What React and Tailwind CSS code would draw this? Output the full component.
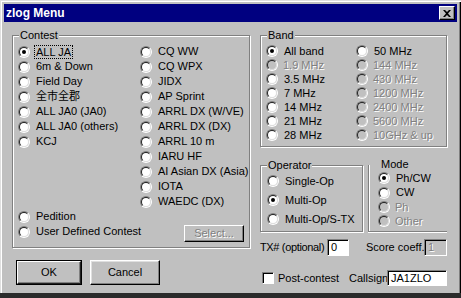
import React from "react";

const Radio = ({ checked, disabled }) => (
  <span className="relative block w-[12px] h-[12px] shrink-0 rounded-full border border-t-[#808080] border-l-[#808080] border-b-white border-r-white">
    {disabled ? (
      <span className="absolute inset-0 rounded-full border border-t-[#202020] border-l-[#202020] border-b-[#dfdfdf] border-r-[#dfdfdf] bg-[#c0c0c0]" />
    ) : (
      <span className="absolute inset-0 rounded-full border border-t-[#202020] border-l-[#202020] border-b-[#dfdfdf] border-r-[#dfdfdf] bg-white" />
    )}
    {checked && <span className="absolute left-[3px] top-[3px] w-[4px] h-[4px] rounded-full bg-black" />}
  </span>
);

const Dis = ({ children }) => (
  <span className="text-[#808080] [text-shadow:1px_1px_0_#ffffff]">{children}</span>
);

const Item = ({ label, checked, disabled, focus, h = "h-[15px]" }) => (
  <div className={`flex items-center gap-[5px] whitespace-nowrap ${h}`}>
    <Radio checked={checked} disabled={disabled} />
    {disabled ? (
      <Dis>{label}</Dis>
    ) : focus ? (
      <span className="pl-[1px] pr-[1px] outline outline-1 outline-dotted outline-black leading-[12px]">{label}</span>
    ) : (
      <span className="pl-[1px]">{label}</span>
    )}
  </div>
);

const Group = ({ label, className, children }) => (
  <div className={`relative border border-[#808080] shadow-[inset_1px_1px_0_#ffffff,1px_1px_0_#ffffff] ${className}`}>
    <span className="absolute left-[6px] top-[-8px] bg-[#c0c0c0] px-[1px] leading-[14px]">{label}</span>
    {children}
  </div>
);

const Input = ({ className, children, disabled }) =>
  disabled ? (
    <div className={`flex items-center pl-[3px] border border-t-[#808080] border-l-[#808080] border-b-white border-r-white shadow-[inset_1px_1px_0_#000000] bg-[#c0c0c0] ${className}`}>
      <Dis>{children}</Dis>
    </div>
  ) : (
    <div className={`flex items-center pl-[3px] border border-t-[#808080] border-l-[#808080] border-b-white border-r-white shadow-[inset_1px_1px_0_#000000] bg-white ${className}`}>
      {children}
    </div>
  );

export default function App() {
  const contest1 = ["ALL JA", "6m & Down", "Field Day", "全市全郡", "ALL JA0 (JA0)", "ALL JA0 (others)", "KCJ"];
  const contest2 = [
    "CQ WW",
    "CQ WPX",
    "JIDX",
    "AP Sprint",
    "ARRL DX (W/VE)",
    "ARRL DX (DX)",
    "ARRL 10 m",
    "IARU HF",
    "AI Asian DX (Asia)",
    "IOTA",
    "WAEDC (DX)",
  ];
  const band1 = [
    ["All band", false, true],
    ["1.9 MHz", true],
    ["3.5 MHz"],
    ["7 MHz"],
    ["14 MHz"],
    ["21 MHz"],
    ["28 MHz"],
  ];
  const band2 = [["50 MHz"], ["144 MHz", true], ["430 MHz", true], ["1200 MHz", true], ["2400 MHz", true], ["5600 MHz", true], ["10GHz & up", true]];

  return (
    <div className="w-[461px] h-[298px] overflow-hidden bg-[#c0c0c0] flex flex-col pt-[4px] px-[4px] text-[11px] text-black font-['Liberation_Sans','Noto_Sans_CJK_JP',Arial,sans-serif] shadow-[inset_1px_1px_0_#dfdfdf,inset_2px_2px_0_#ffffff,inset_-1px_0_0_#000000,inset_-2px_0_0_#808080] border-b-[5px] border-b-[#2b2b2b]">
      {/* Title bar */}
      <div className="h-[18px] shrink-0 bg-[#000080] flex items-center justify-between pl-[2px] pr-[2px]">
        <span className="text-white font-bold text-[12px] leading-none">zlog Menu</span>
        <div className="w-[16px] h-[14px] bg-[#c0c0c0] border border-t-white border-l-white border-b-black border-r-black shadow-[inset_-1px_-1px_0_#808080] flex items-center justify-center">
          <svg width="8" height="7" viewBox="0 0 8 7">
            <path d="M0 0 L2 0 L4 2 L6 0 L8 0 L5 3.5 L8 7 L6 7 L4 5 L2 7 L0 7 L3 3.5 Z" fill="#000" />
          </svg>
        </div>
      </div>

      <div className="flex mt-[13px]">
        {/* Left column */}
        <div className="ml-[8px] flex flex-col">
          <Group label="Contest" className="w-[238px] h-[213px]">
            <div className="flex pt-[8px] pl-[5px]">
              <div className="w-[122px] flex flex-col">
                {contest1.map((c, i) => (
                  <Item key={c} label={c} checked={i === 0} focus={i === 0} />
                ))}
                <div className="h-[60px]" />
                <Item label="Pedition" />
                <Item label="User Defined Contest" />
              </div>
              <div className="flex flex-col">
                {contest2.map((c) => (
                  <Item key={c} label={c} />
                ))}
                <div className="mt-[16px] ml-[44px] w-[60px] h-[17px] flex items-center justify-center border border-t-white border-l-white border-b-black border-r-black shadow-[inset_-1px_-1px_0_#808080]">
                  <Dis>Select...</Dis>
                </div>
              </div>
            </div>
          </Group>
          <div className="flex mt-[12px] ml-[4px] gap-[8px]">
            <div className="w-[66px] h-[25px] border border-black">
              <div className="w-full h-full flex items-center justify-center border border-t-white border-l-white border-b-[#202020] border-r-[#202020] shadow-[inset_-1px_-1px_0_#808080]">
                OK
              </div>
            </div>
            <div className="w-[70px] h-[25px] flex items-center justify-center border border-t-white border-l-white border-b-black border-r-black shadow-[inset_-1px_-1px_0_#808080,inset_1px_1px_0_#dfdfdf]">
              Cancel
            </div>
          </div>
        </div>

        {/* Right column */}
        <div className="ml-[10px] flex flex-col">
          <Group label="Band" className="w-[187px] h-[112px]">
            <div className="flex pt-[8px] pl-[5px]">
              <div className="w-[90px] flex flex-col">
                {band1.map(([l, d, c]) => (
                  <Item key={l} label={l} disabled={d} checked={c} h="h-[14px]" />
                ))}
              </div>
              <div className="flex flex-col">
                {band2.map(([l, d]) => (
                  <Item key={l} label={l} disabled={d} h="h-[14px]" />
                ))}
              </div>
            </div>
          </Group>

          <div className="flex mt-[18px] h-[67px]">
            <Group label="Operator" className="w-[103px] h-[67px]">
              <div className="flex flex-col gap-[5px] pt-[8px] pl-[6px]">
                <Item label="Single-Op" h="h-[14px]" />
                <Item label="Multi-Op" checked h="h-[14px]" />
                <Item label="Multi-Op/S-TX" h="h-[14px]" />
              </div>
            </Group>
            <div className="relative ml-[5px] w-[79px] h-[67px] border-l border-b border-[#808080] shadow-[inset_1px_0_0_#ffffff,0_1px_0_#ffffff]">
              <span className="absolute left-[11px] top-[-8px] bg-[#c0c0c0] px-[1px] leading-[14px]">Mode</span>
              <div className="flex flex-col pt-[6px] pl-[9px]">
                <Item label="Ph/CW" checked h="h-[14.4px]" />
                <Item label="CW" h="h-[14.4px]" />
                <Item label="Ph" disabled h="h-[14.4px]" />
                <Item label="Other" disabled h="h-[14.4px]" />
              </div>
            </div>
          </div>

          <div className="flex items-center mt-[7px] h-[17px]">
            <span className="w-[67px] whitespace-nowrap tracking-[-0.35px]">TX# (optional)</span>
            <Input className="w-[22px] h-[17px]">0</Input>
            <span className="ml-[17px] w-[58px] whitespace-nowrap">Score coeff.</span>
            <Input disabled className="w-[23px] h-[17px]">1</Input>
          </div>

          <div className="flex items-center mt-[14px] h-[16px]">
            <div className="ml-[2px] w-[12px] h-[12px] bg-white border border-t-[#808080] border-l-[#808080] border-b-white border-r-white shadow-[inset_1px_1px_0_#000000]" />
            <span className="ml-[4px] w-[71px] whitespace-nowrap">Post-contest</span>
            <span className="w-[38px] whitespace-nowrap">Callsign</span>
            <Input className="w-[60px] h-[16px]">JA1ZLO</Input>
          </div>
        </div>
      </div>
    </div>
  );
}
